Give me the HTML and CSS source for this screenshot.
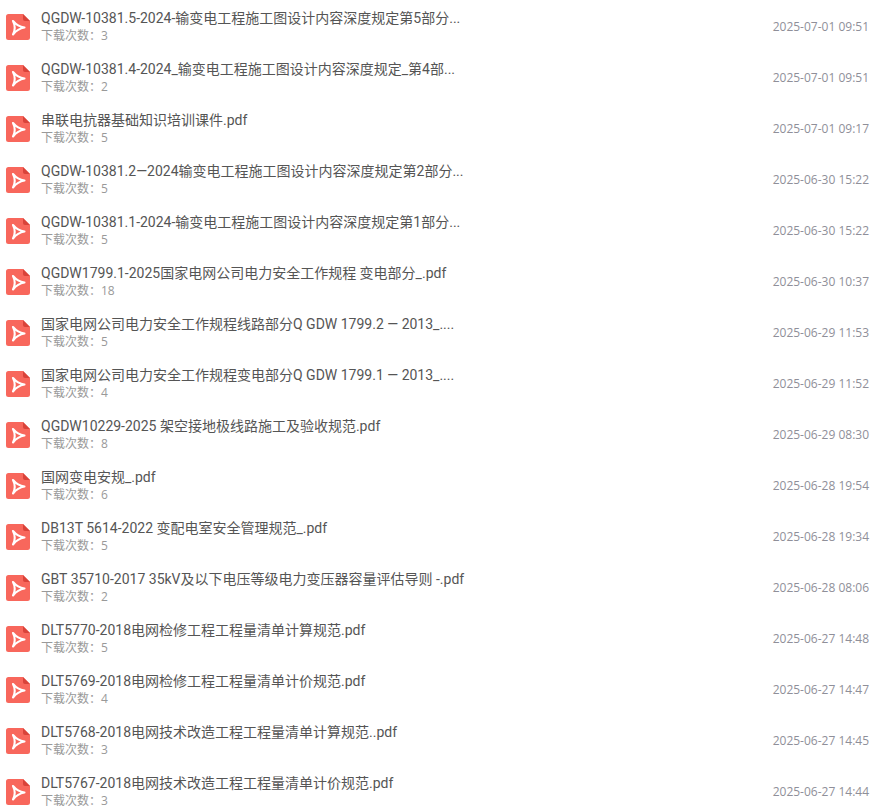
FILE: index.html
```html
<!DOCTYPE html>
<html lang="zh">
<head>
  <meta charset="UTF-8" />
  <meta name="viewport" content="width=device-width, initial-scale=1.0" />
  <title>下载列表</title>
  <link rel="stylesheet" href="styles.css">
</head>
<body>
  <svg class="icon-defs" width="0" height="0">
    <symbol id="pdf" viewBox="0 0 24 26">
      <path d="M2.5 0H17L24 7V23.5A2.5 2.5 0 0 1 21.5 26H2.5A2.5 2.5 0 0 1 0 23.5V2.5A2.5 2.5 0 0 1 2.5 0Z" fill="#f8675c"/>
      <path d="M17 0L24 7H19A2 2 0 0 1 17 5Z" fill="#d9433a"/>
      <path d="M7 7Q11.6 12.6 18.5 13.5Q11.6 14.6 7 20.5Q10.4 13.7 7 7Z" fill="none" stroke="#fff" stroke-width="2.1" stroke-linejoin="round"/>
    </symbol>
  </svg>

  <ul class="file-list">
    <li class="file-row">
      <svg class="file-icon"><use href="#pdf"/></svg>
      <div class="file-info"><p class="file-name">QGDW-10381.5-2024-输变电工程施工图设计内容深度规定第5部分...</p><p class="file-count">下载次数：3</p></div>
      <time class="file-date">2025-07-01 09:51</time>
    </li>
    <li class="file-row">
      <svg class="file-icon"><use href="#pdf"/></svg>
      <div class="file-info"><p class="file-name">QGDW-10381.4-2024_输变电工程施工图设计内容深度规定_第4部...</p><p class="file-count">下载次数：2</p></div>
      <time class="file-date">2025-07-01 09:51</time>
    </li>
    <li class="file-row">
      <svg class="file-icon"><use href="#pdf"/></svg>
      <div class="file-info"><p class="file-name">串联电抗器基础知识培训课件.pdf</p><p class="file-count">下载次数：5</p></div>
      <time class="file-date">2025-07-01 09:17</time>
    </li>
    <li class="file-row">
      <svg class="file-icon"><use href="#pdf"/></svg>
      <div class="file-info"><p class="file-name">QGDW-10381.2—2024输变电工程施工图设计内容深度规定第2部分...</p><p class="file-count">下载次数：5</p></div>
      <time class="file-date">2025-06-30 15:22</time>
    </li>
    <li class="file-row">
      <svg class="file-icon"><use href="#pdf"/></svg>
      <div class="file-info"><p class="file-name">QGDW-10381.1-2024-输变电工程施工图设计内容深度规定第1部分...</p><p class="file-count">下载次数：5</p></div>
      <time class="file-date">2025-06-30 15:22</time>
    </li>
    <li class="file-row">
      <svg class="file-icon"><use href="#pdf"/></svg>
      <div class="file-info"><p class="file-name">QGDW1799.1-2025国家电网公司电力安全工作规程 变电部分_.pdf</p><p class="file-count">下载次数：18</p></div>
      <time class="file-date">2025-06-30 10:37</time>
    </li>
    <li class="file-row">
      <svg class="file-icon"><use href="#pdf"/></svg>
      <div class="file-info"><p class="file-name">国家电网公司电力安全工作规程线路部分Q GDW 1799.2 — 2013_....</p><p class="file-count">下载次数：5</p></div>
      <time class="file-date">2025-06-29 11:53</time>
    </li>
    <li class="file-row">
      <svg class="file-icon"><use href="#pdf"/></svg>
      <div class="file-info"><p class="file-name">国家电网公司电力安全工作规程变电部分Q GDW 1799.1 — 2013_....</p><p class="file-count">下载次数：4</p></div>
      <time class="file-date">2025-06-29 11:52</time>
    </li>
    <li class="file-row">
      <svg class="file-icon"><use href="#pdf"/></svg>
      <div class="file-info"><p class="file-name">QGDW10229-2025 架空接地极线路施工及验收规范.pdf</p><p class="file-count">下载次数：8</p></div>
      <time class="file-date">2025-06-29 08:30</time>
    </li>
    <li class="file-row">
      <svg class="file-icon"><use href="#pdf"/></svg>
      <div class="file-info"><p class="file-name">国网变电安规_.pdf</p><p class="file-count">下载次数：6</p></div>
      <time class="file-date">2025-06-28 19:54</time>
    </li>
    <li class="file-row">
      <svg class="file-icon"><use href="#pdf"/></svg>
      <div class="file-info"><p class="file-name">DB13T 5614-2022 变配电室安全管理规范_.pdf</p><p class="file-count">下载次数：5</p></div>
      <time class="file-date">2025-06-28 19:34</time>
    </li>
    <li class="file-row">
      <svg class="file-icon"><use href="#pdf"/></svg>
      <div class="file-info"><p class="file-name">GBT 35710-2017 35kV及以下电压等级电力变压器容量评估导则 -.pdf</p><p class="file-count">下载次数：2</p></div>
      <time class="file-date">2025-06-28 08:06</time>
    </li>
    <li class="file-row">
      <svg class="file-icon"><use href="#pdf"/></svg>
      <div class="file-info"><p class="file-name">DLT5770-2018电网检修工程工程量清单计算规范.pdf</p><p class="file-count">下载次数：5</p></div>
      <time class="file-date">2025-06-27 14:48</time>
    </li>
    <li class="file-row">
      <svg class="file-icon"><use href="#pdf"/></svg>
      <div class="file-info"><p class="file-name">DLT5769-2018电网检修工程工程量清单计价规范.pdf</p><p class="file-count">下载次数：4</p></div>
      <time class="file-date">2025-06-27 14:47</time>
    </li>
    <li class="file-row">
      <svg class="file-icon"><use href="#pdf"/></svg>
      <div class="file-info"><p class="file-name">DLT5768-2018电网技术改造工程工程量清单计算规范..pdf</p><p class="file-count">下载次数：3</p></div>
      <time class="file-date">2025-06-27 14:45</time>
    </li>
    <li class="file-row">
      <svg class="file-icon"><use href="#pdf"/></svg>
      <div class="file-info"><p class="file-name">DLT5767-2018电网技术改造工程工程量清单计价规范.pdf</p><p class="file-count">下载次数：3</p></div>
      <time class="file-date">2025-06-27 14:44</time>
    </li>
  </ul>
</body>
</html>
```

FILE: styles.css
```css
* {
  margin: 0;
  padding: 0;
  box-sizing: border-box;
}

html {
  height: 100%;
  overflow: hidden;
}

body {
  background: #fff;
  font-family: "Open Sans", "Noto Sans CJK SC", sans-serif;
  overflow: hidden;
}

.icon-defs {
  display: block;
  height: 0;
}

.file-list {
  list-style: none;
  padding-top: 1px;
}

.file-row {
  display: flex;
  align-items: center;
  height: 51px;
  padding: 0 18px 0 6px;
}

.file-icon {
  flex: none;
  width: 24px;
  height: 26px;
  margin-right: 11px;
}

.file-info {
  flex: 1;
  min-width: 0;
}

.file-name {
  color: #555;
  font-family: Roboto, "Noto Sans CJK SC", sans-serif;
  font-size: 14px;
  line-height: 18px;
  white-space: nowrap;
}

.file-count {
  color: #999;
  font-size: 12px;
  line-height: 17px;
}

.file-date {
  color: #8f8f99;
  font-size: 12px;
}
```
